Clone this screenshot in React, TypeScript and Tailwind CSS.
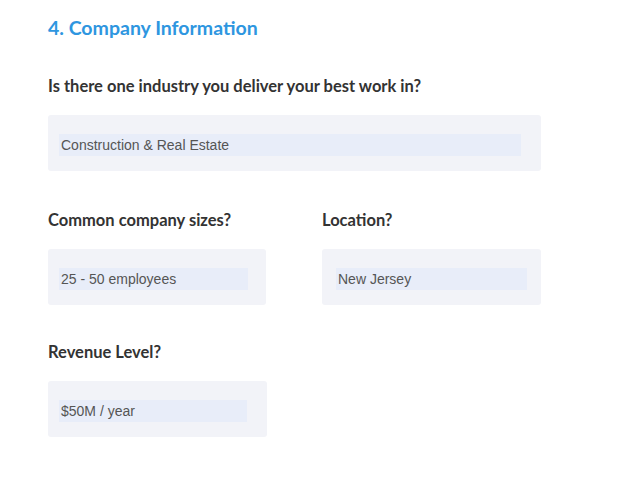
export default function App() {
  return (
    <div className="min-h-screen bg-white pl-[48px] pt-[14px]" style={{ fontFamily: 'Lato, "Open Sans", sans-serif' }}>
      <h2 className="text-[19.5px] font-bold leading-[28px] text-[#2e96e0]">4. Company Information</h2>

      <div className="mt-[32px] w-[493px]">
        <Label text="Is there one industry you deliver your best work in?" />
        <Field value="Construction & Real Estate" innerWidth="w-[462px]" />
      </div>

      <div className="mt-[37px] flex w-[493px] gap-[56px]">
        <div className="w-[218px]">
          <Label text="Common company sizes?" />
          <Field value="25 - 50 employees" innerWidth="w-[189px]" />
        </div>
        <div className="w-[219px]">
          <Label text="Location?" />
          <Field value="New Jersey" innerWidth="w-[191px]" inset="pl-[14px]" />
        </div>
      </div>

      <div className="mt-[35px] w-[219px]">
        <Label text="Revenue Level?" />
        <Field value="$50M / year" innerWidth="w-[188px]" />
      </div>
    </div>
  )
}

function Label({ text }: { text: string }) {
  return <p className="text-[16.5px] font-bold leading-[24px] text-[#333]">{text}</p>
}

function Field({ value, innerWidth, inset = 'pl-[11px]' }: { value: string; innerWidth: string; inset?: string }) {
  return (
    <div className={`mt-[17px] h-[56px] rounded-[3px] bg-[#f2f3f8] pt-[19px] ${inset}`}>
      <div
        className={`flex h-[22px] items-center bg-[#e8edf9] px-[2px] text-[14px] text-[#555] ${innerWidth}`}
        style={{ fontFamily: '"Liberation Sans", Arial, sans-serif' }}
      >
        {value}
      </div>
    </div>
  )
}
